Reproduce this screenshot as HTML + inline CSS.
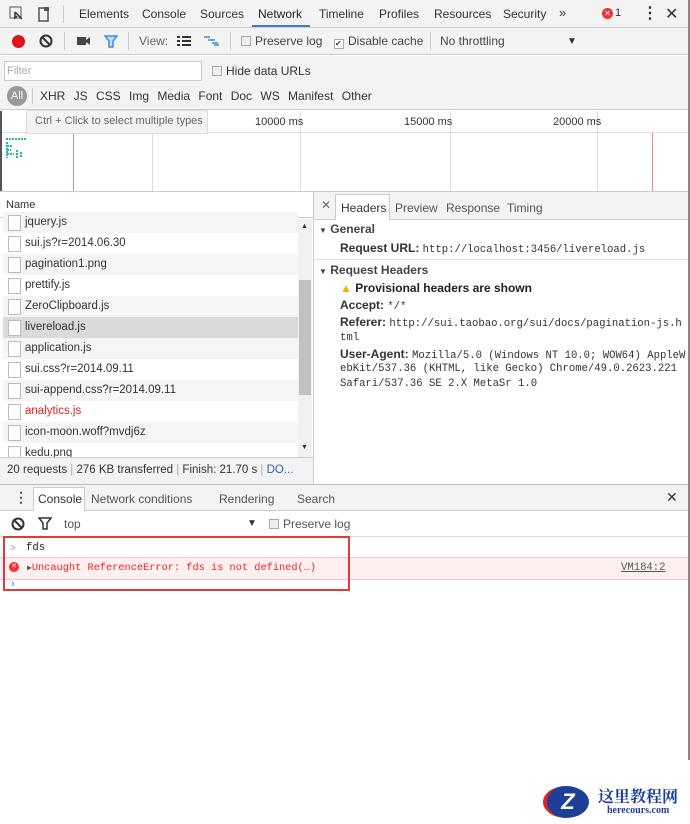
<!DOCTYPE html>
<html><head><meta charset="utf-8"><style>
*{box-sizing:border-box;margin:0;padding:0}
body{width:690px;height:824px;background:#fff;font-family:"Liberation Sans",sans-serif;font-size:12px;color:#333;position:relative;overflow:hidden}
.a{position:absolute;white-space:nowrap}
.mono{font-family:"Liberation Mono",monospace;font-size:10.6px}
.cb{display:inline-block;width:10px;height:10px;border:1px solid #aaa;background:#eee;vertical-align:-1px;margin-right:4px}
.row{position:absolute;left:3px;width:295px;height:21px;padding-left:22px;line-height:21px;font-size:11.5px}
.row:before{content:"";position:absolute;left:5px;top:3px;width:11px;height:14px;border:1px solid #bbb;background:#fff}
.t{top:7px;font-size:12px}
</style></head><body>
<!-- tab bar -->
<div class="a" style="left:0;top:0;width:690px;height:28px;background:#f3f3f3;border-bottom:1px solid #ccc"></div>
<svg class="a" style="left:9px;top:6px" width="50" height="16"><rect x="1" y="1" width="11" height="11" fill="none" stroke="#555"/><path d="M6 6l7 7M6 6v6l2-2" stroke="#333" stroke-width="1.5" fill="none"/><rect x="30" y="2" width="9" height="13" fill="none" stroke="#555" stroke-width="1.5"/><rect x="35" y="1" width="5" height="4" fill="#555"/></svg>
<div class="a" style="left:63px;top:5px;width:1px;height:18px;background:#ccc"></div>
<div class="a t" style="left:79px">Elements</div>
<div class="a t" style="left:142px">Console</div>
<div class="a t" style="left:200px">Sources</div>
<div class="a t" style="left:258px;color:#222">Network</div>
<div class="a" style="left:252px;top:25px;width:58px;height:2px;background:#3879d9"></div>
<div class="a t" style="left:319px">Timeline</div>
<div class="a t" style="left:379px">Profiles</div>
<div class="a t" style="left:434px">Resources</div>
<div class="a t" style="left:503px">Security</div>
<div class="a" style="top:5px;left:559px;font-size:13px">»</div>
<div class="a" style="top:8px;left:602px;width:11px;height:11px;border-radius:50%;background:#e33;color:#fff;font-size:8px;line-height:11px;text-align:center">✕</div>
<div class="a" style="top:7px;left:615px;font-size:11px">1</div>
<div class="a" style="top:3px;left:642px;font-size:16px;font-weight:bold">⋮</div>
<div class="a" style="top:4px;left:665px;font-size:16px">✕</div>
<!-- toolbar -->
<div class="a" style="left:0;top:28px;width:690px;height:27px;background:#f3f3f3;border-bottom:1px solid #ccc"></div>
<div class="a" style="left:12px;top:35px;width:13px;height:13px;border-radius:50%;background:#e0141e"></div>
<svg class="a" style="left:39px;top:34px" width="14" height="14"><circle cx="7" cy="7" r="5.5" stroke="#333" stroke-width="2" fill="none"/><path d="M3 3l8 8" stroke="#333" stroke-width="2"/></svg>
<div class="a" style="left:64px;top:32px;width:1px;height:18px;background:#ccc"></div>
<svg class="a" style="left:77px;top:36px" width="14" height="10"><rect x="0" y="1" width="9" height="8" fill="#444"/><path d="M9 4l4-3v8l-4-3z" fill="#444"/></svg>
<svg class="a" style="left:104px;top:35px" width="14" height="13"><path d="M1 1h12l-4 5v6h-4v-6z" fill="#bfe0f8" stroke="#3b8fd9" stroke-width="1.5"/></svg>
<div class="a" style="left:128px;top:32px;width:1px;height:18px;background:#ccc"></div>
<div class="a" style="top:34px;left:139px;color:#666">View:</div>
<svg class="a" style="left:177px;top:36px" width="14" height="10"><path d="M0 1h3M5 1h9M0 5h3M5 5h9M0 9h3M5 9h9" stroke="#333" stroke-width="2"/></svg>
<svg class="a" style="left:204px;top:36px" width="16" height="10"><path d="M0 1h6M4 4h7M8 7h6M10 9h5" stroke="#3b8fd9" stroke-width="1.6"/></svg>
<div class="a" style="left:230px;top:32px;width:1px;height:18px;background:#ccc"></div>
<div class="a" style="top:34px;left:241px;color:#444"><span class="cb"></span>Preserve log</div>
<div class="a" style="top:34px;left:334px;color:#444"><span class="cb" style="background:#fff;font-size:8px;line-height:8px">✔</span>Disable cache</div>
<div class="a" style="left:430px;top:32px;width:1px;height:18px;background:#ccc"></div>
<div class="a" style="top:34px;left:440px;color:#444">No throttling</div>
<div class="a" style="top:36px;left:567px;font-size:10px">▼</div>
<!-- filter -->
<div class="a" style="left:0;top:56px;width:690px;height:54px;background:#f3f3f3;border-bottom:1px solid #ccc"></div>
<div class="a" style="left:4px;top:61px;width:198px;height:20px;background:#fff;border:1px solid #ccc;color:#aaa;font-size:11px;padding:3px 2px">Filter</div>
<div class="a" style="top:64px;left:212px;color:#333"><span class="cb"></span>Hide data URLs</div>
<div class="a" style="left:7px;top:86px;width:20px;height:20px;border-radius:10px;background:#999;color:#fff;font-size:11px;line-height:20px;text-align:center">All</div>
<div class="a" style="left:32px;top:88px;width:1px;height:16px;background:#ccc"></div>
<div class="a" style="top:89px;left:40px;word-spacing:5px">XHR JS CSS Img Media Font Doc WS Manifest Other</div>
<!-- timeline -->
<div class="a" style="left:0;top:111px;width:2px;height:80px;background:#555"></div>
<div class="a" style="left:2px;top:132px;width:688px;height:1px;background:#ddd"></div>
<div class="a" style="left:152px;top:111px;width:1px;height:80px;background:#ddd"></div>
<div class="a" style="left:300px;top:111px;width:1px;height:80px;background:#ddd"></div>
<div class="a" style="left:450px;top:111px;width:1px;height:80px;background:#ddd"></div>
<div class="a" style="left:597px;top:111px;width:1px;height:80px;background:#ddd"></div>
<div class="a" style="left:73px;top:133px;width:1px;height:58px;background:#99f"></div>
<div class="a" style="left:652px;top:133px;width:1px;height:58px;background:#e88"></div>
<div class="a" style="top:116px;left:255px;font-size:11px">10000 ms</div>
<div class="a" style="top:116px;left:404px;font-size:11px">15000 ms</div>
<div class="a" style="top:116px;left:553px;font-size:11px">20000 ms</div>
<div class="a" style="left:26px;top:110px;width:182px;height:24px;background:#f3f3f3;border:1px solid #ddd;color:#666;font-size:11px;padding:4px 8px">Ctrl + Click to select multiple types</div>
<svg class="a" style="left:4px;top:137px" width="24" height="25"><path d="M2 2h20M3 5v16M3 9h6M3 13h4M3 17h7M13 13v8M17 15v6" stroke="#2bb59a" stroke-width="2" stroke-dasharray="2 1"/></svg>
<div class="a" style="left:0;top:191px;width:690px;height:1px;background:#ccc"></div>
<!-- left pane -->
<div class="a" style="left:0;top:192px;width:313px;height:26px;border-bottom:1px solid #ccc;padding:7px 6px;font-size:11px">Name</div>
<div class="a" style="left:313px;top:192px;width:1px;height:292px;background:#ccc"></div>
<div class="row" style="top:212px;background:#f5f5f5">jquery.js</div>
<div class="row" style="top:233px">sui.js?r=2014.06.30</div>
<div class="row" style="top:254px;background:#f5f5f5">pagination1.png</div>
<div class="row" style="top:275px">prettify.js</div>
<div class="row" style="top:296px;background:#f5f5f5">ZeroClipboard.js</div>
<div class="row" style="top:317px;background:#dadada">livereload.js</div>
<div class="row" style="top:338px;background:#f5f5f5">application.js</div>
<div class="row" style="top:359px">sui.css?r=2014.09.11</div>
<div class="row" style="top:380px;background:#f5f5f5">sui-append.css?r=2014.09.11</div>
<div class="row" style="top:401px;color:#d22">analytics.js</div>
<div class="row" style="top:422px;background:#f5f5f5">icon-moon.woff?mvdj6z</div>
<div class="row" style="top:443px;height:14px;overflow:hidden">kedu.png</div>
<div class="a" style="left:298px;top:219px;width:14px;height:238px;background:#f1f1f1"></div>
<div class="a" style="left:299px;top:280px;width:12px;height:115px;background:#c1c1c1"></div>
<div class="a" style="left:301px;top:223px;font-size:7px">▲</div>
<div class="a" style="left:301px;top:444px;font-size:7px">▼</div>
<div class="a" style="left:0;top:457px;width:313px;height:27px;border-top:1px solid #ccc;background:#f3f3f3;padding:6px 7px;font-size:11.5px;color:#333">20 requests <span style="color:#aaa">|</span> 276 KB transferred <span style="color:#aaa">|</span> Finish: 21.70 s <span style="color:#aaa">|</span> <span style="color:#2a5db0">DO...</span></div>
<!-- right pane -->
<div class="a" style="left:314px;top:192px;width:376px;height:28px;background:#f3f3f3;border-bottom:1px solid #ccc"></div>
<div class="a" style="left:321px;top:198px;font-size:12px;color:#666">✕</div>
<div class="a" style="left:335px;top:194px;width:55px;height:26px;background:#fff;border:1px solid #ccc;border-bottom:none"></div>
<div class="a" style="left:341px;top:201px">Headers</div>
<div class="a" style="left:395px;top:201px;color:#555">Preview</div>
<div class="a" style="left:446px;top:201px;color:#555">Response</div>
<div class="a" style="left:507px;top:201px;color:#555">Timing</div>
<div class="a" style="left:319px;top:222px;font-weight:bold;color:#444"><span style="font-size:8px">▼</span> General</div>
<div class="a" style="left:340px;top:241px;font-weight:bold;color:#333">Request URL: <span class="mono" style="font-weight:normal">http://localhost:3456/livereload.js</span></div>
<div class="a" style="left:315px;top:259px;width:375px;height:1px;background:#ddd"></div>
<div class="a" style="left:319px;top:263px;font-weight:bold;color:#444"><span style="font-size:8px">▼</span> Request Headers</div>
<div class="a" style="left:340px;top:281px;font-weight:bold;color:#222"><span style="color:#f0b400">▲</span> Provisional headers are shown</div>
<div class="a" style="left:340px;top:298px;font-weight:bold;color:#333">Accept: <span class="mono" style="font-weight:normal">*/*</span></div>
<div class="a" style="left:340px;top:315px;font-weight:bold;color:#333">Referer: <span class="mono" style="font-weight:normal">http://sui.taobao.org/sui/docs/pagination-js.h</span></div>
<div class="a mono" style="left:340px;top:332px">tml</div>
<div class="a" style="left:340px;top:347px;font-weight:bold;color:#333">User-Agent: <span class="mono" style="font-weight:normal">Mozilla/5.0 (Windows NT 10.0; WOW64) AppleW</span></div>
<div class="a mono" style="left:340px;top:363px">ebKit/537.36 (KHTML, like Gecko) Chrome/49.0.2623.221</div>
<div class="a mono" style="left:340px;top:378px">Safari/537.36 SE 2.X MetaSr 1.0</div>
<!-- drawer -->
<div class="a" style="left:0;top:484px;width:690px;height:27px;background:#f3f3f3;border-top:1px solid #bbb;border-bottom:1px solid #ccc"></div>
<div class="a" style="left:14px;top:489px;font-size:14px;font-weight:bold;color:#555">⋮</div>
<div class="a" style="left:33px;top:487px;width:52px;height:24px;background:#fff;border:1px solid #ccc;border-bottom:none"></div>
<div class="a" style="left:38px;top:492px">Console</div>
<div class="a" style="left:91px;top:492px;color:#555">Network conditions</div>
<div class="a" style="left:219px;top:492px;color:#555">Rendering</div>
<div class="a" style="left:297px;top:492px;color:#555">Search</div>
<div class="a" style="left:666px;top:489px;font-size:14px">✕</div>
<div class="a" style="left:0;top:512px;width:690px;height:25px;border-bottom:1px solid #ddd"></div>
<svg class="a" style="left:11px;top:517px" width="14" height="14"><circle cx="7" cy="7" r="5.5" stroke="#333" stroke-width="2" fill="none"/><path d="M3 3l8 8" stroke="#333" stroke-width="2"/></svg>
<svg class="a" style="left:38px;top:517px" width="14" height="13"><path d="M1 1h12l-4 5v6h-4v-6z" fill="none" stroke="#333" stroke-width="1.5"/></svg>
<div class="a" style="left:64px;top:517px;color:#555">top</div>
<div class="a" style="left:247px;top:518px;font-size:10px">▼</div>
<div class="a" style="left:269px;top:517px;color:#555"><span class="cb"></span>Preserve log</div>
<div class="a" style="left:0;top:557px;width:690px;height:23px;background:#fff0f0;border-top:1px solid #fbd;border-bottom:1px solid #fbd"></div>
<div class="a" style="left:10px;top:543px;color:#999;font-size:10px">&gt;</div>
<div class="a mono" style="left:26px;top:542px;color:#222">fds</div>
<div class="a" style="left:9px;top:562px;width:10px;height:10px;border-radius:50%;background:#e33;color:#fff;font-size:7px;line-height:10px;text-align:center">✕</div>
<div class="a mono" style="left:27px;top:562px;color:#e22;font-size:10.3px"><span style="color:#555;font-size:8px">▶</span>Uncaught ReferenceError: fds is not defined(…)</div>
<div class="a mono" style="left:621px;top:562px;color:#555;text-decoration:underline">VM184:2</div>
<div class="a" style="left:11px;top:578px;color:#3b7de0;font-size:11px">›</div>
<div class="a" style="left:3px;top:536px;width:347px;height:55px;border:2px solid #e5393c"></div>
<div class="a" style="left:688px;top:0;width:2px;height:760px;background:#888"></div>
<!-- watermark -->
<div class="a" style="left:543px;top:786px;width:46px;height:32px;border-radius:50%;background:#1d3f95;color:#fff;font-weight:bold;font-size:22px;text-align:center;line-height:32px;font-style:italic;border-left:4px solid #d22">Z</div>
<div class="a" style="left:598px;top:784px;color:#1d3f95;font-weight:bold;font-size:16px;font-family:'Liberation Serif','Noto Serif CJK SC',serif">这里教程网</div>
<div class="a" style="left:607px;top:805px;color:#1d3f95;font-weight:bold;font-size:10px;font-family:'Liberation Serif',serif">herecours.com</div>
</body></html>
